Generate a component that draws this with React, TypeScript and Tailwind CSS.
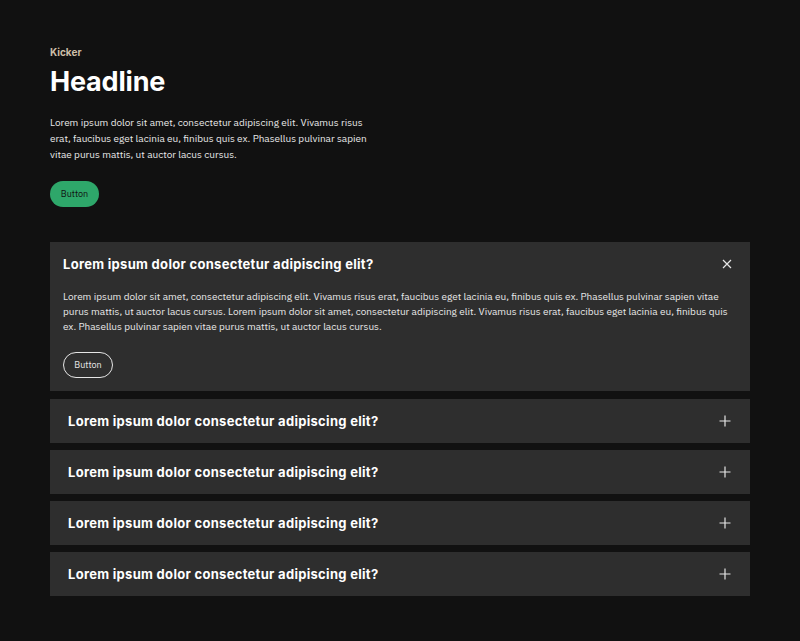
import React from "react";

const body = { fontFamily: '"IBM Plex Sans", "Noto Sans", Roboto, sans-serif' };
const head = { fontFamily: 'Inter, "Noto Sans", sans-serif' };

const Q = "Lorem ipsum dolor consectetur adipiscing elit?";

function Plus() {
  return (
    <svg width="12" height="12" viewBox="0 0 12 12" fill="none" stroke="#e5e5e5" strokeWidth="1.2">
      <path d="M6 0.5V11.5M0.5 6H11.5" />
    </svg>
  );
}

function Close() {
  return (
    <svg width="10" height="10" viewBox="0 0 10 10" fill="none" stroke="#e5e5e5" strokeWidth="1.2">
      <path d="M1 1L9 9M9 1L1 9" />
    </svg>
  );
}

export default function App() {
  return (
    <div className="min-h-[641px] w-full bg-[#111111] text-white" style={body}>
      <div className="mx-[50px] pt-[46px]">
        <div className="text-[10px] font-bold leading-[12px] text-[#cdbfa8]" style={head}>Kicker</div>
        <h1 className="mt-[7px] text-[27px] font-bold leading-[34px] tracking-[-0.2px]" style={head}>Headline</h1>
        <p className="mt-[16px] w-[330px] text-[10px] leading-[16px] text-[#e8e8e8]">
          Lorem ipsum dolor sit amet, consectetur adipiscing elit. Vivamus risus erat, faucibus eget lacinia eu, finibus quis ex. Phasellus pulvinar sapien vitae purus mattis, ut auctor lacus cursus.
        </p>
        <button className="mt-[18px] flex h-[26px] w-[49px] items-center justify-center rounded-full bg-[#2ea76a] text-[9px] text-[#111111]">
          Button
        </button>

        <div className="mt-[35px] flex flex-col gap-[8px]">
          <div className="bg-[#2e2e2e] px-[13px] pt-[14px] pb-[13px]">
            <div className="flex items-center justify-between">
              <div className="text-[13px] font-bold leading-[16px] tracking-[0.3px]" style={head}>{Q}</div>
              <div className="mr-[5px]"><Close /></div>
            </div>
            <p className="mt-[17px] text-[10px] leading-[15px] text-[#e8e8e8]">
              Lorem ipsum dolor sit amet, consectetur adipiscing elit. Vivamus risus erat, faucibus eget lacinia eu, finibus quis ex. Phasellus pulvinar sapien vitae purus mattis, ut auctor lacus cursus. Lorem ipsum dolor sit amet, consectetur adipiscing elit. Vivamus risus erat, faucibus eget lacinia eu, finibus quis ex. Phasellus pulvinar sapien vitae purus mattis, ut auctor lacus cursus.
            </p>
            <button className="mt-[18px] flex h-[26px] w-[50px] items-center justify-center rounded-full border border-[#e5e5e5] text-[9px] text-[#e8e8e8]">
              Button
            </button>
          </div>
          <div className="flex flex-col gap-[7px]">
            {[0, 1, 2, 3].map((i) => (
              <div key={i} className="flex h-[44px] items-center justify-between bg-[#2e2e2e] pl-[18px] pr-[19px]">
                <div className="text-[13px] font-bold leading-[16px] tracking-[0.3px]" style={head}>{Q}</div>
                <Plus />
              </div>
            ))}
          </div>
        </div>
      </div>
    </div>
  );
}
